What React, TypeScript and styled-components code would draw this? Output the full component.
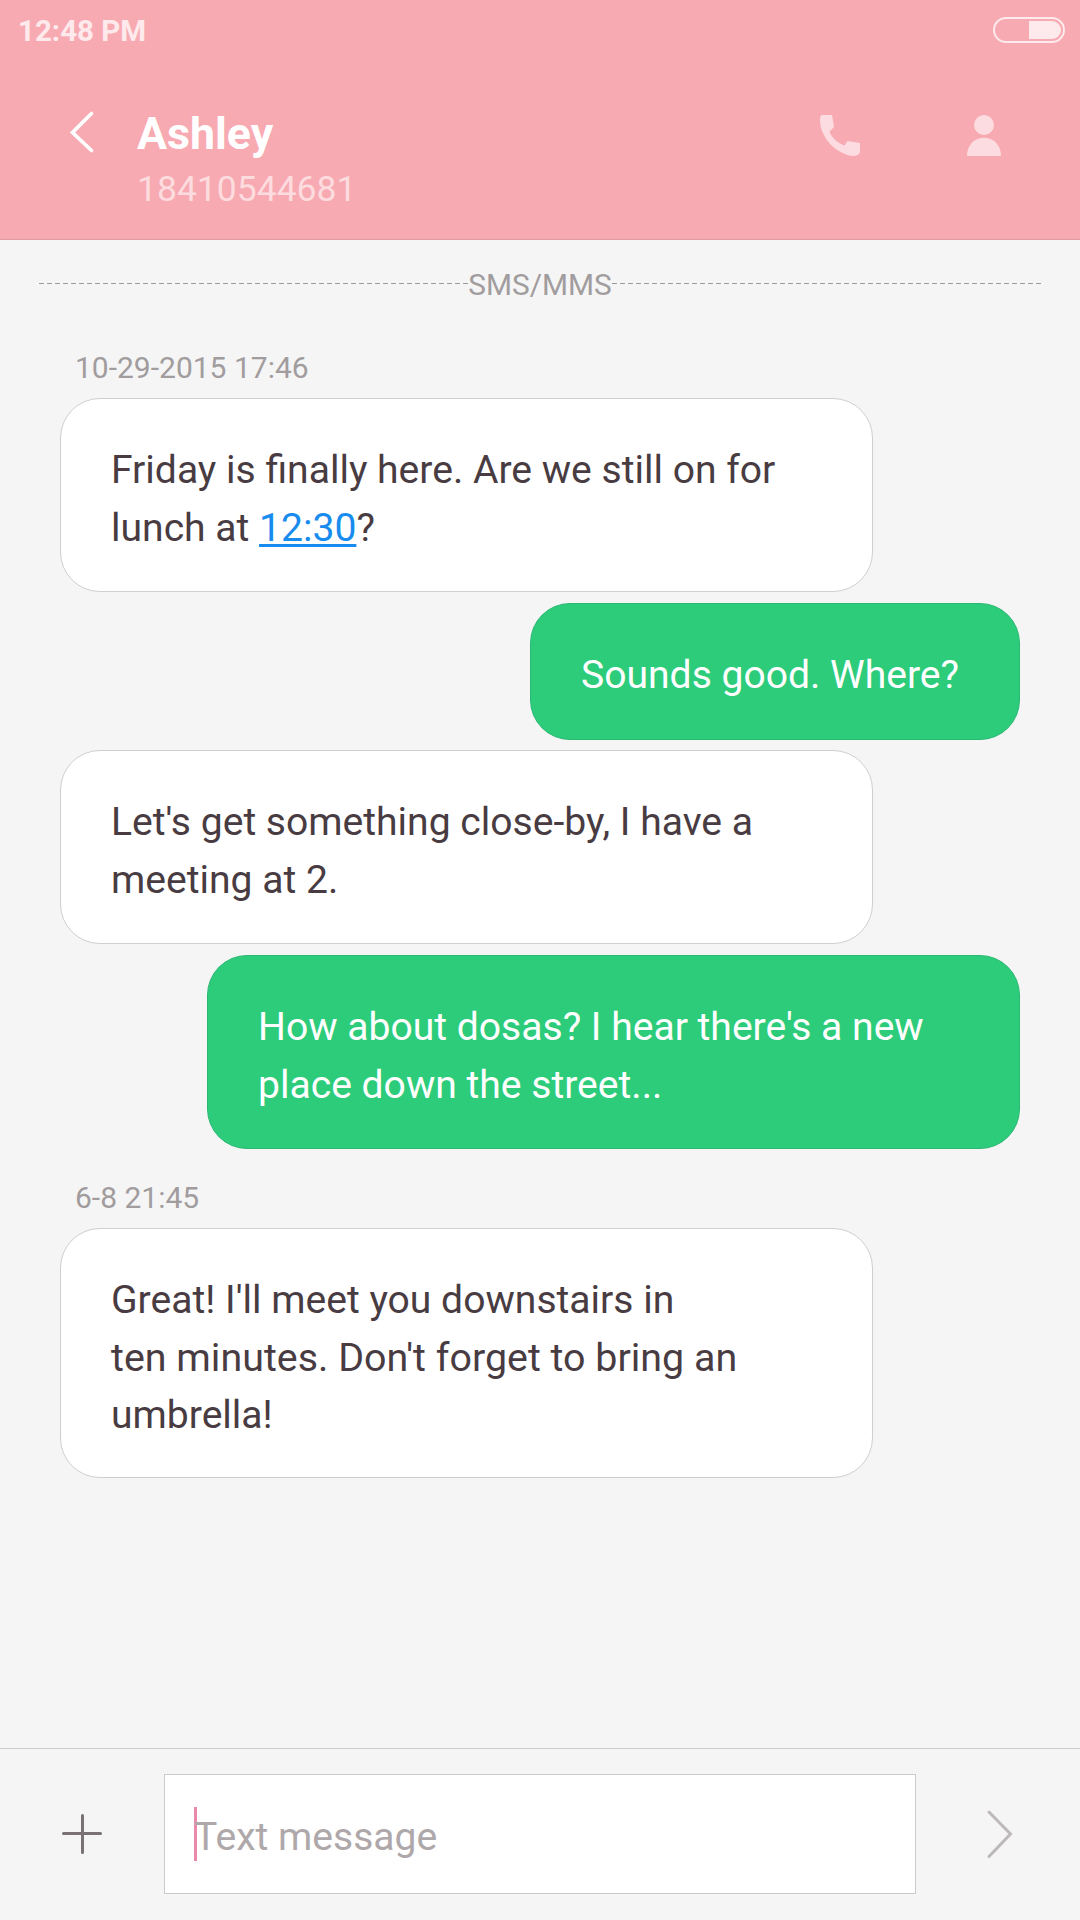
import React from "react";
import styled, { createGlobalStyle } from "styled-components";

const GlobalStyle = createGlobalStyle`
  * { box-sizing: border-box; }
  body { margin: 0; background: #f5f5f5; }
`;

const Screen = styled.div`
  width: 1080px;
  height: 1920px;
  display: flex;
  flex-direction: column;
  overflow: hidden;
  background: #f5f5f5;
  color: #483c42;
  font-family: Roboto, "Liberation Sans", sans-serif;
`;

const Header = styled.header`
  height: 240px;
  flex: none;
  background: #f7aab2;
  border-bottom: 1px solid #e29aa4;
`;

const StatusBar = styled.div`
  height: 60px;
  padding: 0 15px 0 18px;
  display: flex;
  align-items: center;
  justify-content: space-between;
`;

const Clock = styled.span`
  font-size: 29.5px;
  font-weight: 700;
  line-height: 60px;
  padding-top: 2px;
  color: #feeaec;
`;

const Battery = styled.div`
  width: 72px;
  height: 26px;
  padding: 2px;
  border: 2px solid #feeaec;
  border-radius: 13px;
  display: flex;
  justify-content: flex-end;
`;

const BatteryLevel = styled.div`
  width: 32px;
  background: #feeaec;
  border-radius: 0 9px 9px 0;
`;

const TitleBar = styled.div`
  display: flex;
  padding: 45px 78px 0 67px;
`;

const BackIcon = styled.svg`
  width: 30px;
  height: 46px;
  margin: 4px 40px 0 0;
`;

const Contact = styled.div`
  flex: 1;
`;

const Name = styled.h1`
  margin: 0;
  padding-top: 1px;
  font-size: 44.7px;
  line-height: 56px;
  font-weight: 700;
  color: #fff;
`;

const Phone = styled.div`
  font-size: 35.5px;
  line-height: 55px;
  color: #fddcdf;
`;

const Actions = styled.div`
  display: flex;
  gap: 99px;
  padding-top: 9px;
`;

const ActionIcon = styled.svg`
  width: 42px;
  height: 44px;
  fill: #fcdce0;
`;

const Thread = styled.main`
  flex: 1;
  display: flex;
  flex-direction: column;
`;

const Divider = styled.div`
  display: flex;
  align-items: center;
  height: 60px;
  margin: 14px 39px 0;
  font-size: 29.8px;
  color: #a19c9d;
`;

const Dashes = styled.div`
  flex: 1;
  height: 1px;
  margin-top: -2px;
  background: repeating-linear-gradient(90deg, #9b9999 0 5px, transparent 5px 8px);
`;

const Stamp = styled.time<{ $top: number }>`
  margin: ${(p) => p.$top}px 0 10px 75px;
  height: 40px;
  font-size: 30px;
  line-height: 40px;
  color: #a19c9d;
`;

const Messages = styled.div`
  display: flex;
  flex-direction: column;
  gap: 10px;
  padding: 0 60px;
`;

const bubbleHeights = { 1: 137, 2: 194, 3: 250 };

const Bubble = styled.div<{ $lines: 1 | 2 | 3; $sent?: boolean }>`
  align-self: ${(p) => (p.$sent ? "flex-end" : "flex-start")};
  width: ${(p) => (p.$lines > 1 ? "813px" : "490px")};
  height: ${(p) => bubbleHeights[p.$lines]}px;
  margin-top: ${(p) => (p.$sent ? 1 : 0)}px;
  padding: ${(p) => (p.$lines === 3 ? 43 : 42)}px 50px 0;
  border: 1px solid ${(p) => (p.$sent ? "#2bb873" : "#cfcfcf")};
  border-radius: 40px;
  background: ${(p) => (p.$sent ? "#2ccc7b" : "#fff")};
  color: ${(p) => (p.$sent ? "#fff" : "#483c42")};
  font-size: 39.1px;
  line-height: ${(p) => (p.$lines === 3 ? "57.2px" : "58px")};
  white-space: nowrap;
`;

const LooseLine = styled.span`
  font-size: 39.4px;
`;

const TimeLink = styled.span`
  color: #188cee;
  text-decoration: underline;
  text-decoration-thickness: 3px;
  text-underline-offset: 3px;
  text-decoration-skip-ink: none;
`;

const Composer = styled.footer`
  height: 172px;
  flex: none;
  border-top: 1px solid #cbcbcb;
  display: flex;
  padding: 25px 66px 0 60px;
`;

const ComposerIcon = styled.svg<{ $w: number; $top: number }>`
  width: ${(p) => p.$w}px;
  height: 52px;
  margin-top: ${(p) => p.$top}px;
  fill: none;
`;

const Field = styled.div`
  width: 752px;
  height: 120px;
  margin: 0 70px 0 60px;
  padding: 0 29px;
  border: 1px solid #cbcbcb;
  background: #fff;
  display: flex;
  align-items: center;
`;

const Caret = styled.i`
  width: 3px;
  height: 54px;
  margin-right: -3px;
  background: #ec88a8;
`;

const Placeholder = styled.span`
  font-size: 39.1px;
  line-height: 60px;
  padding-top: 6px;
  color: #aea8aa;
`;

export default function App() {
  return (
    <>
      <GlobalStyle />
      <Screen>
        <Header>
          <StatusBar>
            <Clock>12:48 PM</Clock>
            <Battery>
              <BatteryLevel />
            </Battery>
          </StatusBar>
          <TitleBar>
            <BackIcon viewBox="0 0 30 46">
              <path d="M24.500 4.500 5.500 23.500 24.500 41.500" fill="none" stroke="#fff" strokeWidth="3.700" strokeLinecap="round" />
            </BackIcon>
            <Contact>
              <Name>Ashley</Name>
              <Phone>18410544681</Phone>
            </Contact>
            <Actions>
              <ActionIcon viewBox="0 0 42 44">
                <path d="M3 1H13L15 13 10.500 17.500C12.500 23.500 19 29.500 25.500 31.500L28.500 27 41 29V38Q40 41.500 35 42C18 41 1 24 1 6Q1 1 3 1Z" />
              </ActionIcon>
              <ActionIcon viewBox="0 0 42 44">
                <circle cx="24" cy="11" r="10" />
                <path d="M7 42C7 17.500 41 17.500 41 42Z" />
              </ActionIcon>
            </Actions>
          </TitleBar>
        </Header>
        <Thread>
          <Divider>
            <Dashes />
            SMS/MMS
            <Dashes />
          </Divider>
          <Stamp $top={34}>10-29-2015 17:46</Stamp>
          <Messages>
            <Bubble $lines={2}>
              Friday is finally here. Are we still on for
              <br />
              lunch at <TimeLink>12:30</TimeLink>?
            </Bubble>
            <Bubble $lines={1} $sent>
              Sounds good. Where?
            </Bubble>
            <Bubble $lines={2}>
              Let's get something close-by, I have a
              <br />
              meeting at 2.
            </Bubble>
            <Bubble $lines={2} $sent>
              How about dosas? I hear there's a new
              <br />
              place down the street...
            </Bubble>
          </Messages>
          <Stamp $top={29}>6-8 21:45</Stamp>
          <Messages>
            <Bubble $lines={3}>
              Great! I'll meet you downstairs in
              <br />
              <LooseLine>ten minutes. Don't forget to bring an</LooseLine>
              <br />
              umbrella!
            </Bubble>
          </Messages>
        </Thread>
        <Composer>
          <ComposerIcon $w={44} $top={34} viewBox="0 0 44 52">
            <path d="M3.500 25.500H40.500M22.500 7.500V44.500" stroke="#797173" strokeWidth="3" strokeLinecap="round" />
          </ComposerIcon>
          <Field>
            <Caret />
            <Placeholder>Text message</Placeholder>
          </Field>
          <ComposerIcon $w={28} $top={34} viewBox="0 0 28 52">
            <path d="M3 4 24.500 26 3 48.500" stroke="#bdb9ba" strokeWidth="3" strokeLinecap="round" />
          </ComposerIcon>
        </Composer>
      </Screen>
    </>
  );
}
